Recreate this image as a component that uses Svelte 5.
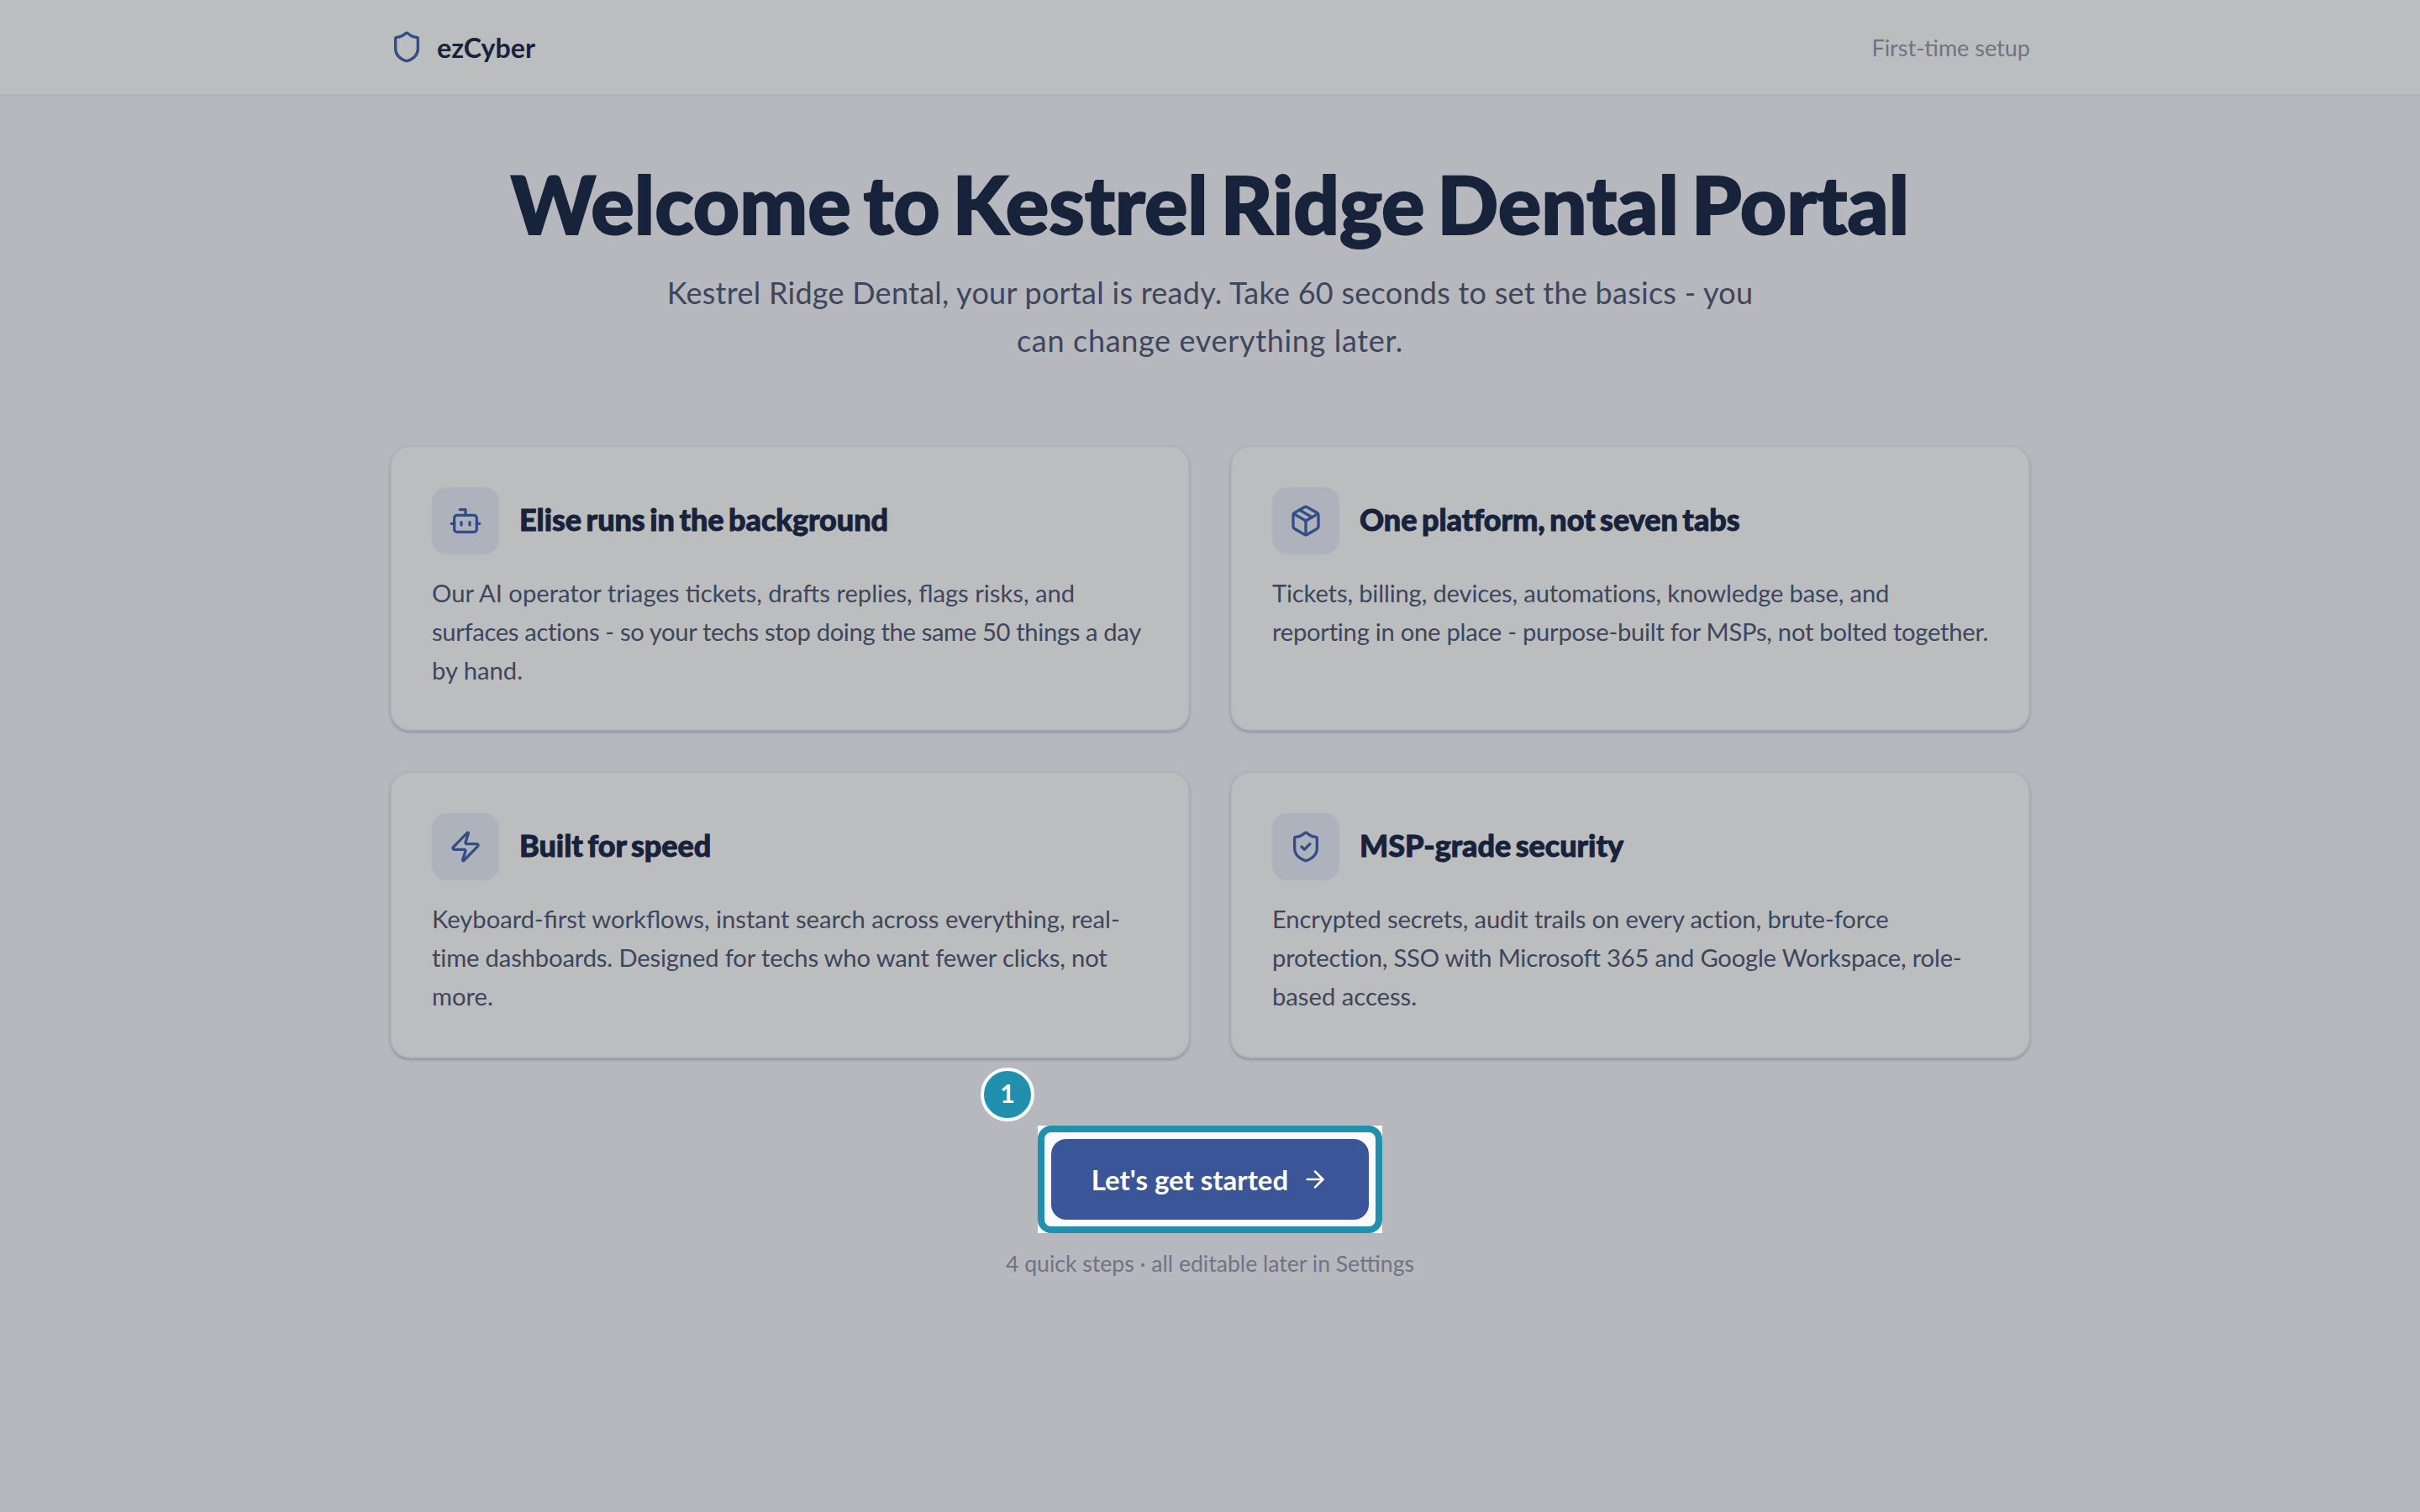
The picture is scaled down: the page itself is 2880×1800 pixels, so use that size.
<script>
    // track = letter-spacing per line, keeps each line at its width in the substitute font
    const cards = [
        {
            title: "Elise runs in the background",
            icon: "bot",
            lines: [
                { text: "Our AI operator triages tickets, drafts replies, flags risks, and", track: 0 },
                { text: "surfaces actions - so your techs stop doing the same 50 things a day", track: -0.35 },
                { text: "by hand.", track: 0 },
            ],
        },
        {
            title: "One platform, not seven tabs",
            icon: "package",
            lines: [
                { text: "Tickets, billing, devices, automations, knowledge base, and", track: -0.16 },
                { text: "reporting in one place - purpose-built for MSPs, not bolted together.", track: -0.26 },
            ],
        },
        {
            title: "Built for speed",
            icon: "zap",
            lines: [
                { text: "Keyboard-first workflows, instant search across everything, real-", track: 0 },
                { text: "time dashboards. Designed for techs who want fewer clicks, not", track: -0.15 },
                { text: "more.", track: 0 },
            ],
        },
        {
            title: "MSP-grade security",
            icon: "shield",
            lines: [
                { text: "Encrypted secrets, audit trails on every action, brute-force", track: -0.11 },
                { text: "protection, SSO with Microsoft 365 and Google Workspace, role-", track: -0.2 },
                { text: "based access.", track: 0 },
            ],
        },
    ];
</script>

<div class="page">
    <header class="topbar">
        <div class="topbar-inner">
            <div class="brand">
                <svg class="ic" width="40" height="40" viewBox="0 0 24 24">
                    <path d="M20 13c0 5-3.5 7.5-7.66 8.95a1 1 0 0 1-.67-.01C7.5 20.5 4 18 4 13V6a1 1 0 0 1 1-1c2 0 4.5-1.2 6.24-2.72a1.17 1.17 0 0 1 1.52 0C14.51 3.81 17 5 19 5a1 1 0 0 1 1 1z" />
                </svg>
                <span>ezCyber</span>
            </div>
            <span class="setup">First-time setup</span>
        </div>
    </header>

    <main class="content">
        <h1>Welcome to Kestrel Ridge Dental Portal</h1>
        <p class="lead">
            <span>Kestrel Ridge Dental, your portal is ready. Take 60 seconds to set the basics - you</span>
            <span class="lead-end">can change everything later.</span>
        </p>

        <div class="grid">
            {#each cards as card}
                <section class="card">
                    <div class="card-head">
                        <div class="icon-box">
                            <svg class="ic" width="40" height="40" viewBox="0 0 24 24">
                                {#if card.icon === "bot"}
                                    <path d="M12 8V4H8" />
                                    <rect x="4" y="8" width="16" height="12" rx="2" />
                                    <path d="M2 14h2" />
                                    <path d="M20 14h2" />
                                    <path d="M15 13v2" />
                                    <path d="M9 13v2" />
                                {:else if card.icon === "package"}
                                    <path d="m7.5 4.27 9 5.15" />
                                    <path d="M21 8a2 2 0 0 0-1-1.73l-7-4a2 2 0 0 0-2 0l-7 4A2 2 0 0 0 3 8v8a2 2 0 0 0 1 1.73l7 4a2 2 0 0 0 2 0l7-4A2 2 0 0 0 21 16Z" />
                                    <path d="m3.3 7 8.7 5 8.7-5" />
                                    <path d="M12 22V12" />
                                {:else if card.icon === "zap"}
                                    <path d="M4 14a1 1 0 0 1-.78-1.63l9.9-10.2a.5.5 0 0 1 .86.46l-1.92 6.02A1 1 0 0 0 13 10h7a1 1 0 0 1 .78 1.63l-9.9 10.2a.5.5 0 0 1-.86-.46l1.92-6.02A1 1 0 0 0 11 14z" />
                                {:else}
                                    <path d="M20 13c0 5-3.5 7.5-7.66 8.95a1 1 0 0 1-.67-.01C7.5 20.5 4 18 4 13V6a1 1 0 0 1 1-1c2 0 4.5-1.2 6.24-2.72a1.17 1.17 0 0 1 1.52 0C14.51 3.81 17 5 19 5a1 1 0 0 1 1 1z" />
                                    <path d="m9 12 2 2 4-4" />
                                {/if}
                            </svg>
                        </div>
                        <h2>{card.title}</h2>
                    </div>
                    <p>
                        {#each card.lines as line}
                            <span style:letter-spacing="{line.track}px">{line.text}</span>
                        {/each}
                    </p>
                </section>
            {/each}
        </div>

        <div class="spot">
            <span class="badge">1</span>
            <button class="start">
                Let's get started
                <svg class="arrow" width="32" height="32" viewBox="0 0 24 24">
                    <path d="M5 12h14" />
                    <path d="m12 5 7 7-7 7" />
                </svg>
            </button>
        </div>
        <p class="note">4 quick steps · all editable later in Settings</p>
    </main>
</div>

<style>
    :global(body) {
        margin: 0;
        background: #b7b8bd;
    }
    .page {
        min-height: 1800px;
        background: #b7b8bd;
        font-family: "Lato", "Noto Sans", sans-serif;
        color: #17223b;
    }
    .topbar {
        height: 112px;
        background: #bcbdbf;
        border-bottom: 2px solid #aeb2bb;
    }
    .topbar-inner {
        width: 1952px;
        height: 100%;
        margin: 0 auto;
        display: flex;
        align-items: center;
        justify-content: space-between;
    }
    .brand {
        display: flex;
        align-items: center;
        gap: 16px;
        font-size: 32.2px;
        font-weight: 700;
    }
    .ic {
        fill: none;
        stroke: #344d85;
        stroke-width: 2;
        stroke-linecap: round;
        stroke-linejoin: round;
    }
    .setup {
        font-size: 27px;
        color: #6f7485;
    }
    .content {
        width: 1952px;
        margin: 0 auto;
        display: flex;
        flex-direction: column;
        align-items: center;
    }
    h1 {
        margin: 75px 0 0;
        font-size: 96px;
        line-height: 106px;
        font-weight: 900;
        letter-spacing: 0;
        word-spacing: -8px;
        text-align: center;
        -webkit-text-stroke: 2px #17223b;
    }
    .lead {
        margin: 25px 0 0;
        font-size: 36px;
        line-height: 57px;
        letter-spacing: 0.26px;
        color: #3d465c;
        text-align: center;
    }
    .lead span {
        display: block;
    }
    .lead .lead-end {
        letter-spacing: 0.66px;
    }
    .grid {
        width: 100%;
        margin-top: 96px;
        display: grid;
        grid-template-columns: repeat(2, minmax(0, 1fr));
        grid-template-rows: 340px 342px;
        gap: 48px;
    }
    .card {
        box-sizing: border-box;
        padding: 48px;
        background: #bcbdbf;
        border: 2px solid #aeb2bd;
        border-radius: 24px;
        box-shadow: 0 2px 3px rgba(105, 110, 125, 0.5);
    }
    .card-head {
        display: flex;
        align-items: center;
        gap: 24px;
    }
    .icon-box {
        width: 80px;
        height: 80px;
        flex: none;
        display: flex;
        align-items: center;
        justify-content: center;
        background: #aeb2bc;
        border-radius: 18px;
    }
    h2 {
        margin: 0;
        padding-bottom: 4px;
        font-size: 36px;
        font-weight: 900;
        letter-spacing: -0.05px;
        word-spacing: -3px;
        -webkit-text-stroke: 0.9px #17223b;
    }
    .card p {
        margin: 22.5px 0 0;
        font-size: 29.2px;
        line-height: 46.2px;
        color: #3d465c;
    }
    .card p span {
        display: block;
        white-space: nowrap;
    }
    .spot {
        position: relative;
        margin-top: 80px;
        padding: 16px;
        display: flex;
        background: #f8fafc;
    }
    .spot::after {
        content: "";
        position: absolute;
        inset: 0;
        border: 8px solid #2090ae;
        border-radius: 16px;
    }
    .badge {
        position: absolute;
        left: -68px;
        top: -69px;
        width: 64px;
        height: 64px;
        box-sizing: border-box;
        padding-bottom: 5px;
        display: flex;
        align-items: center;
        justify-content: center;
        background: #2090ae;
        border: 4px solid #f8fafc;
        border-radius: 50%;
        color: #fff;
        font-size: 30px;
        font-weight: 700;
    }
    .start {
        width: 378px;
        height: 96px;
        padding: 0;
        display: flex;
        align-items: center;
        justify-content: center;
        gap: 16px;
        border: none;
        border-radius: 18px;
        background: #3b5599;
        color: #fff;
        font-family: inherit;
        font-size: 33px;
        font-weight: 700;
    }
    .arrow {
        fill: none;
        stroke: #fff;
        stroke-width: 2;
        stroke-linecap: round;
        stroke-linejoin: round;
    }
    .note {
        margin: 20px 0 0;
        font-size: 26.6px;
        color: #6f7485;
    }
</style>
